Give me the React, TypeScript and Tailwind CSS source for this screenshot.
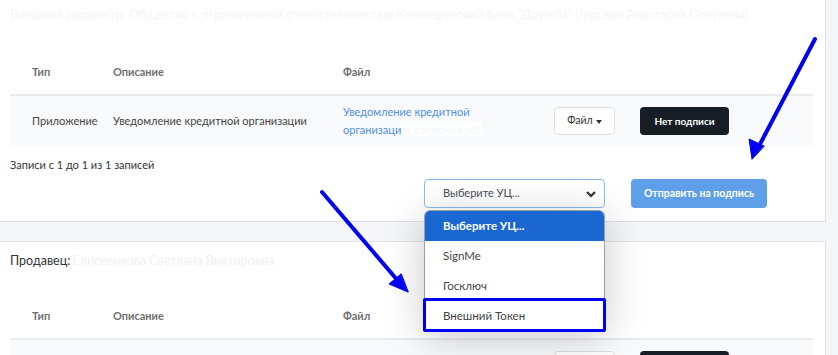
import React from "react";

const font = { fontFamily: "Lato, 'Noto Sans', sans-serif" };

function TableHeader() {
  return (
    <div className="grid h-[46px] grid-cols-[103px_230px_211px_86px_1fr] items-center border-b-2 border-[#e9ecef] text-[11px] font-bold text-[#6f6f6f]">
      <div className="pl-[22px]">Тип</div>
      <div>Описание</div>
      <div>Файл</div>
      <div />
      <div />
    </div>
  );
}

function FileRow() {
  return (
    <div className="grid h-[50px] grid-cols-[103px_230px_211px_86px_1fr] items-center bg-[#f9fafb] text-[11px] text-[#444]">
      <div className="pl-[22px]">Приложение</div>
      <div>Уведомление кредитной организации</div>
      <div className="leading-[18px] text-[#4d8fe5]">
        Уведомление кредитной
        <br />
        организаци
        <span className="bg-white/90 px-[2px] text-[#f3f6fb]">и_сведения.pdf</span>
      </div>
      <div>
        <button className="flex h-[28px] w-[61px] items-center justify-center gap-[3px] rounded border border-[#dcdfe3] bg-white text-[10.5px] text-[#333]">
          Файл
          <span className="mt-[1px] border-x-[3.5px] border-t-[4px] border-x-transparent border-t-[#333]" />
        </button>
      </div>
      <div>
        <button className="flex h-[28px] w-[89px] items-center justify-center rounded bg-[#161d24] text-[10px] font-bold text-white">
          Нет подписи
        </button>
      </div>
    </div>
  );
}

// second table: only the top of its first row is in view
function ClippedRow() {
  return (
    <div className="grid h-[50px] grid-cols-[103px_230px_211px_86px_1fr] items-center bg-[#f9fafb]">
      <div />
      <div />
      <div />
      <div>
        <div className="h-[28px] w-[61px] rounded border border-[#dcdfe3] bg-white" />
      </div>
      <div>
        <div className="h-[28px] w-[89px] rounded bg-[#161d24]" />
      </div>
    </div>
  );
}

export default function App() {
  return (
    <div className="relative h-[355px] w-[838px] overflow-hidden bg-[#f4f6f9]" style={font}>
      {/* first card */}
      <section className="w-[826px] border-b border-r border-[#dde2e8] bg-white pl-[10px] pr-[12px]">
        <div className="flex h-[30px] items-center whitespace-nowrap text-[12.5px] font-semibold text-[#f5f6f8]">
          Внешний параметр: Общество с ограниченной ответственностью Коммерческий банк "Дружба" (Герсеан Анастасия Олеговна)
        </div>
        <div className="mt-[20px]">
          <TableHeader />
          <FileRow />
        </div>
        <div className="mt-[9px] flex h-[20px] items-center text-[11px] text-[#333]">
          Записи с 1 до 1 из 1 записей
        </div>
        <div className="mt-[4px] flex pb-[13px]">
          <div className="ml-[414px] h-[29px] w-[181px]">
            <div className="flex h-full items-center justify-between rounded border border-[#8bbbe9] bg-white pl-[18px] pr-[7px] text-[11px] text-[#495057]">
              <span>Выберите УЦ...</span>
              <svg width="12" height="12" viewBox="0 0 12 12">
                <path d="M2 4l4 4 4-4" fill="none" stroke="#333" strokeWidth="2.2" />
              </svg>
            </div>
          </div>
          <button className="ml-[26px] h-[29px] w-[136px] rounded bg-[#5f9fea] text-[10.5px] font-bold text-white">
            Отправить на подпись
          </button>
        </div>
      </section>

      {/* second card */}
      <section className="mt-[19px] w-[826px] border-r border-t border-[#dde2e8] bg-white pl-[10px] pr-[12px]">
        <div className="flex h-[38px] items-center whitespace-nowrap pt-[1px] text-[12.5px] text-[#333]">
          Продавец:<span className="ml-[2px] text-[#eef0f3]">Елисеенкова Светлана Викторовна</span>
        </div>
        <div className="mt-[14px]">
          <TableHeader />
          <ClippedRow />
        </div>
      </section>

      {/* open select dropdown */}
      <div className="absolute left-[424px] top-[210px] w-[181px] overflow-hidden rounded-t-[6px] border border-[#9aa0a6] bg-white text-[11.5px] text-[#444] shadow-[0_6px_40px_rgba(0,0,0,0.22)]">
        <div className="flex h-[30px] items-center bg-[#1b67d2] pl-[18px] font-bold text-white">Выберите УЦ...</div>
        <div className="flex h-[30px] items-center pl-[18px]">SignMe</div>
        <div className="flex h-[30px] items-center pl-[18px]">Госключ</div>
        <div className="flex h-[30px] items-center pl-[18px]">Внешний Токен</div>
      </div>
      <div className="absolute left-[423px] top-[298px] h-[34px] w-[183px] rounded-[2px] border-[3px] border-[#0000f5]" />

      {/* annotation arrows */}
      <svg className="pointer-events-none absolute left-0 top-0" width="838" height="355">
        <g stroke="#0000f0" strokeWidth="4" strokeLinecap="round" fill="#0000f0">
          <line x1="815" y1="39" x2="758" y2="148" />
          <polygon points="752,159 749,139 764,146" strokeWidth="1" />
          <line x1="322" y1="192" x2="399" y2="282" />
          <polygon points="408,292 389,284 401,274" strokeWidth="1" />
        </g>
      </svg>
    </div>
  );
}
